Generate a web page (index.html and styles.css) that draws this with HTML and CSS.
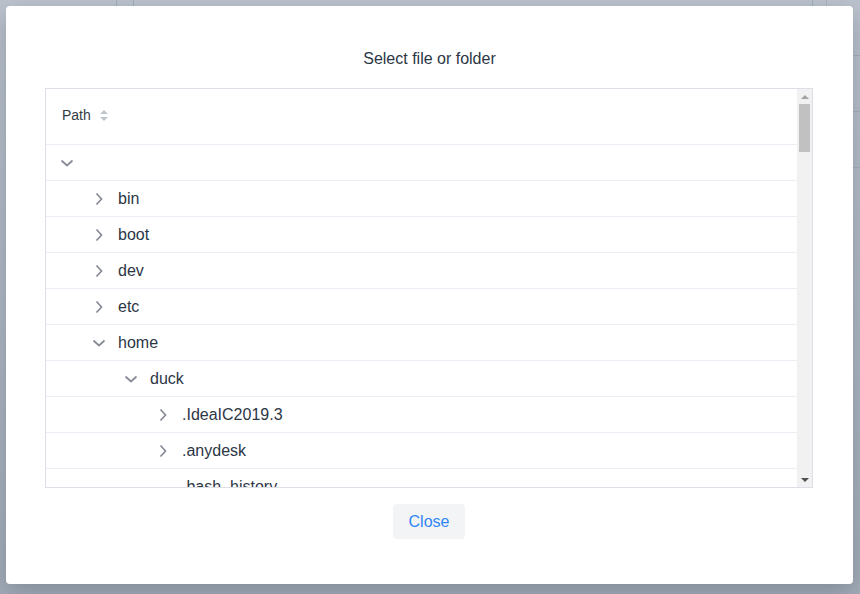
FILE: index.html
```html
<!DOCTYPE html>
<html>
<head>
<meta charset="utf-8">
<link rel="stylesheet" href="styles.css">
</head>
<body>
<div class="page">
  <div class="vline v1"></div>
  <div class="vline v2"></div>
  <div class="vline v3"></div>
  <div class="side">
    <div class="side-row">n</div>
    <div class="side-row">n</div>
    <div class="side-row">ls</div>
  </div>
  <div class="hline h3"></div>
</div>

<div class="modal">
  <div class="title">Select file or folder</div>
  <div class="table">
    <div class="table-body">
      <div class="thead">
        <span class="th-label">Path</span>
        <span class="sort">
          <span class="caret up"></span>
          <span class="caret down"></span>
        </span>
      </div>
      <div class="row lvl0"><span class="ic"><svg viewBox="0 0 14 14"><path d="M1.5 4.5 L7 9.5 L12.5 4.5"/></svg></span><span class="name"></span></div>
      <div class="row lvl1"><span class="ic"><svg viewBox="0 0 14 14"><path d="M4.5 1.5 L9.5 7 L4.5 12.5"/></svg></span><span class="name">bin</span></div>
      <div class="row lvl1"><span class="ic"><svg viewBox="0 0 14 14"><path d="M4.5 1.5 L9.5 7 L4.5 12.5"/></svg></span><span class="name">boot</span></div>
      <div class="row lvl1"><span class="ic"><svg viewBox="0 0 14 14"><path d="M4.5 1.5 L9.5 7 L4.5 12.5"/></svg></span><span class="name">dev</span></div>
      <div class="row lvl1"><span class="ic"><svg viewBox="0 0 14 14"><path d="M4.5 1.5 L9.5 7 L4.5 12.5"/></svg></span><span class="name">etc</span></div>
      <div class="row lvl1"><span class="ic"><svg viewBox="0 0 14 14"><path d="M1.5 4.5 L7 9.5 L12.5 4.5"/></svg></span><span class="name">home</span></div>
      <div class="row lvl2"><span class="ic"><svg viewBox="0 0 14 14"><path d="M1.5 4.5 L7 9.5 L12.5 4.5"/></svg></span><span class="name">duck</span></div>
      <div class="row lvl3"><span class="ic"><svg viewBox="0 0 14 14"><path d="M4.5 1.5 L9.5 7 L4.5 12.5"/></svg></span><span class="name">.IdeaIC2019.3</span></div>
      <div class="row lvl3"><span class="ic"><svg viewBox="0 0 14 14"><path d="M4.5 1.5 L9.5 7 L4.5 12.5"/></svg></span><span class="name">.anydesk</span></div>
      <div class="row lvl3"><span class="ic"></span><span class="name">.bash_history</span></div>
    </div>
    <div class="scrollbar">
      <div class="sb-arrow sb-up"></div>
      <div class="sb-track"><div class="sb-thumb"></div></div>
      <div class="sb-arrow sb-down"></div>
    </div>
  </div>
  <div class="footer">
    <button class="btn">Close</button>
  </div>
</div>
</body>
</html>
```

FILE: styles.css
```css
* { box-sizing: border-box; }
html, body {
  margin: 0;
  padding: 0;
  width: 860px;
  height: 594px;
  overflow: hidden;
  font-family: "Liberation Sans", Arial, sans-serif;
}
.page {
  position: relative;
  width: 860px;
  height: 594px;
  background: linear-gradient(180deg, #bcc3cd 0%, #aeb6c2 60%, #a3acb8 100%);
}
.vline {
  position: absolute;
  top: 0;
  width: 1px;
  background: #a4adba;
}
.v1 { left: 116px; height: 594px; }
.v2 { left: 133px; height: 10px; }
.v3 { left: 812px; height: 10px; }
.side {
  position: absolute;
  left: 826px;
  top: 0;
  width: 60px;
  border-left: 1px solid #a9b1bd;
  display: flex;
  flex-direction: column;
}
.side-row {
  height: 56px;
  line-height: 40px;
  padding-left: 16px;
  font-size: 14px;
  color: #3a414b;
  border-bottom: 1px solid #a6afbb;
}
.side-row:first-child { line-height: 38px; }
.hline {
  position: absolute;
  left: 826px;
  width: 40px;
  height: 1px;
  background: #a6afbb;
}
.h3 { top: 455px; }

.modal {
  position: absolute;
  left: 6px;
  top: 6px;
  width: 847px;
  height: 578px;
  background: #fff;
  border-radius: 4px;
  box-shadow: 0 8px 24px rgba(40, 52, 70, 0.28);
  display: flex;
  flex-direction: column;
  align-items: center;
}
.title {
  margin-top: 43px;
  height: 20px;
  line-height: 20px;
  font-size: 16px;
  color: #2c3645;
}
.table {
  margin-top: 19px;
  align-self: flex-start;
  margin-left: 39px;
  width: 768px;
  height: 400px;
  border: 1px solid #dcdfe6;
  display: flex;
  overflow: hidden;
}
.table-body {
  flex: 1;
  overflow: hidden;
}
.thead {
  height: 56px;
  border-bottom: 1px solid #ebeef5;
  display: flex;
  align-items: center;
  padding-left: 16px;
  padding-bottom: 4px;
  font-size: 14px;
  color: #333b45;
}
.sort {
  display: inline-flex;
  flex-direction: column;
  margin-left: 9px;
  gap: 3px;
  margin-top: 1px;
}
.caret {
  width: 0;
  height: 0;
  border-left: 4px solid transparent;
  border-right: 4px solid transparent;
}
.caret.up { border-bottom: 4px solid #c0c4cc; }
.caret.down { border-top: 4px solid #c0c4cc; }
.row {
  height: 36px;
  border-bottom: 1px solid #ebeef5;
  display: flex;
  align-items: center;
  padding-left: 14px;
  font-size: 16px;
  color: #2c3645;
}
.lvl1 { padding-left: 46px; }
.lvl2 { padding-left: 78px; }
.lvl3 { padding-left: 110px; }
.ic {
  width: 14px;
  height: 14px;
  display: inline-flex;
  margin-right: 12px;
}
.ic svg {
  width: 14px;
  height: 14px;
  fill: none;
  stroke: #868b95;
  stroke-width: 1.7;
}
.scrollbar {
  width: 15px;
  background: #f1f1f1;
  display: flex;
  flex-direction: column;
}
.sb-arrow {
  height: 15px;
  display: flex;
  align-items: center;
  justify-content: center;
}
.sb-up::after {
  content: "";
  border-left: 4px solid transparent;
  border-right: 4px solid transparent;
  border-bottom: 4px solid #a3a3a3;
}
.sb-down::after {
  content: "";
  border-left: 4px solid transparent;
  border-right: 4px solid transparent;
  border-top: 4px solid #505050;
}
.sb-track {
  flex: 1;
  position: relative;
}
.sb-thumb {
  margin: 0 2px;
  height: 48px;
  background: #c1c1c1;
}
.footer {
  margin-top: 16px;
  margin-right: 1px;
}
.btn {
  width: 72px;
  height: 35px;
  border: none;
  border-radius: 4px;
  background: #f3f4f6;
  color: #2f86f6;
  font-family: "Liberation Sans", Arial, sans-serif;
  font-size: 16px;
  padding: 0;
}
```
